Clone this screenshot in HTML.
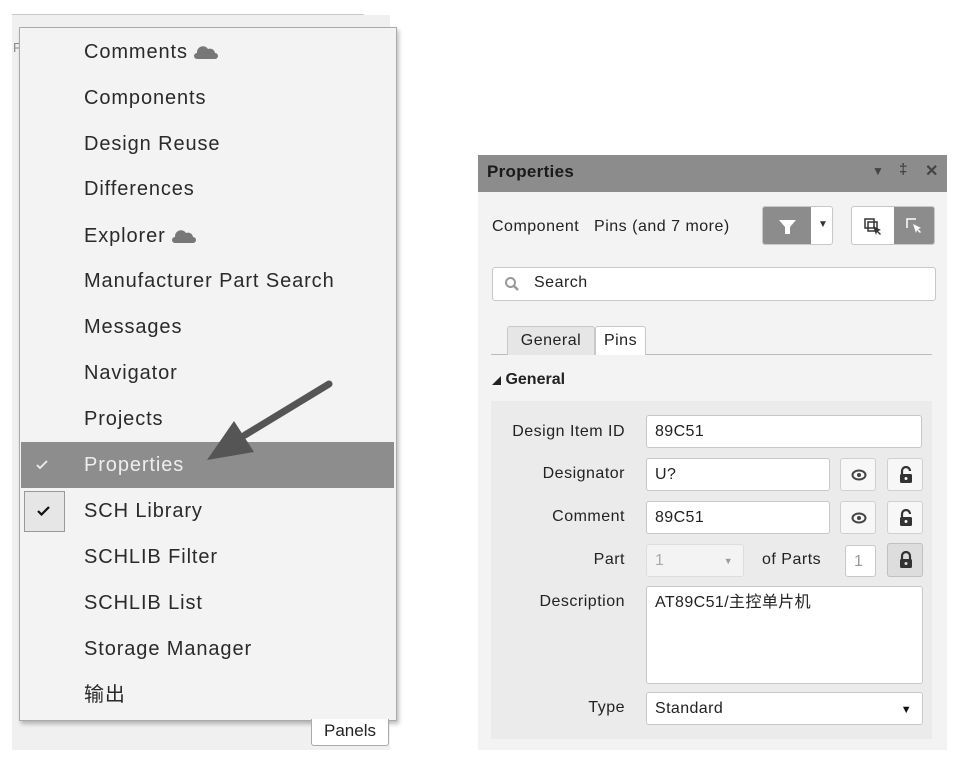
<!DOCTYPE html>
<html><head><meta charset="utf-8"><style>
*{box-sizing:border-box;margin:0;padding:0}
body{width:955px;height:758px;background:#fff;position:relative;overflow:hidden;font-family:"Liberation Sans","Noto Sans CJK SC",sans-serif;color:#222}
.a{position:absolute}
.mi{position:absolute;left:84px;font-size:20px;letter-spacing:0.9px;line-height:24px;color:#2a2a2a;white-space:nowrap}
.cloud{display:inline-block;width:24px;height:13px;vertical-align:-1px;margin-left:6px}
.lbl{position:absolute;right:0;font-size:16px;letter-spacing:0.5px;color:#222;text-align:right;width:160px;white-space:nowrap}
.inp{position:absolute;background:#fff;border:1px solid #c8c8c8;border-radius:3px;font-size:16px;letter-spacing:0.4px;padding-left:8px;line-height:32px;color:#222;white-space:nowrap}
.btn{position:absolute;background:#f7f7f7;border:1px solid #cfcfcf;border-radius:3px}
.p{font-size:16px;letter-spacing:0.5px;white-space:nowrap}
</style></head><body>
<div class="a" style="left:12px;top:14px;width:352px;height:1px;background:#c8c8c8"></div>
<div class="a" style="left:12px;top:15px;width:378px;height:735px;background:#f0f0f0"></div>
<div class="a" style="left:13px;top:40px;font-size:13px;color:#888">F</div>
<div class="a" style="left:19px;top:27px;width:378px;height:694px;background:#f3f3f3;border:1px solid #aaa;box-shadow:2px 3px 4px rgba(0,0,0,.25)"></div>
<div class="a" style="left:21px;top:442px;width:373px;height:46px;background:#8d8d8d"></div>
<div class="a" style="left:24px;top:491px;width:41px;height:41px;border:1px solid #999;background:#e6e6e6"></div>
<svg class="a" style="left:36px;top:460px" width="12" height="10"><path d="M1 5l3 3l7-7" fill="none" stroke="#eee" stroke-width="1.8"/></svg>
<svg class="a" style="left:37px;top:506px" width="13" height="10"><path d="M1 5l3.5 3.5l7.5-7.5" fill="none" stroke="#111" stroke-width="2.2"/></svg>
<div class="mi" style="top:40px">Comments<svg class="cloud" viewBox="0 0 24 13"><path d="M3 13a3 3 0 0 1 0-6a6 6 0 0 1 11-4a5 5 0 0 1 7 4a3 3 0 0 1 0 6z" fill="#777"/></svg></div>
<div class="mi" style="top:86px">Components</div>
<div class="mi" style="top:132px">Design Reuse</div>
<div class="mi" style="top:177px">Differences</div>
<div class="mi" style="top:224px">Explorer<svg class="cloud" viewBox="0 0 24 13"><path d="M3 13a3 3 0 0 1 0-6a6 6 0 0 1 11-4a5 5 0 0 1 7 4a3 3 0 0 1 0 6z" fill="#777"/></svg></div>
<div class="mi" style="top:269px">Manufacturer Part Search</div>
<div class="mi" style="top:315px">Messages</div>
<div class="mi" style="top:361px">Navigator</div>
<div class="mi" style="top:407px">Projects</div>
<div class="mi" style="top:453px;color:#eee">Properties</div>
<div class="mi" style="top:499px">SCH Library</div>
<div class="mi" style="top:545px">SCHLIB Filter</div>
<div class="mi" style="top:591px">SCHLIB List</div>
<div class="mi" style="top:637px">Storage Manager</div>
<div class="mi" style="top:683px">输出</div>
<div class="a" style="left:311px;top:719px;width:78px;height:27px;background:#fff;border:1px solid #aaa;border-top:none;border-radius:0 0 3px 3px;font-size:17px;text-align:center;line-height:24px">Panels</div>
<svg class="a" style="left:0;top:0" width="400" height="500"><line x1="329" y1="384" x2="245" y2="435" stroke="#555" stroke-width="7" stroke-linecap="round"/><polygon points="207,460 234,421 254,452" fill="#555"/></svg>
<div class="a" style="left:478px;top:155px;width:469px;height:37px;background:#8c8c8c"></div>
<div class="a" style="left:487px;top:162px;font-size:17px;letter-spacing:0.3px;font-weight:bold;color:#1a1a1a">Properties</div>
<div class="a" style="left:872px;top:164px;font-size:12px;color:#444">▼</div>
<div class="a" style="left:899px;top:161px;font-size:15px;color:#444;font-weight:bold">‡</div>
<div class="a" style="left:925px;top:161px;font-size:16px;color:#444;font-weight:bold">✕</div>
<div class="a" style="left:478px;top:192px;width:469px;height:558px;background:#f3f3f3"></div>
<div class="a p" style="left:492px;top:218px">Component&nbsp;&nbsp; Pins (and 7 more)</div>
<div class="a" style="left:762px;top:206px;width:71px;height:39px;border:1px solid #c8c8c8;border-radius:3px;background:#fff;overflow:hidden"><div style="position:absolute;left:0;top:0;width:48px;height:39px;background:#8c8c8c"></div><svg style="position:absolute;left:16px;top:13px" width="17" height="14"><path d="M0 0h17l-6 7v7h-5v-7z" fill="#fff"/></svg><div style="position:absolute;left:55px;top:12px;font-size:10px;color:#333">▼</div></div>
<div class="a" style="left:851px;top:206px;width:84px;height:39px;border:1px solid #c8c8c8;border-radius:3px;background:#fff;overflow:hidden"><div style="position:absolute;left:42px;top:0;width:42px;height:39px;background:#8c8c8c"></div>
<svg style="position:absolute;left:12px;top:11px" width="20" height="18"><rect x="1" y="1" width="9" height="9" fill="none" stroke="#333" stroke-width="1.5"/><rect x="4" y="4" width="9" height="9" fill="none" stroke="#333" stroke-width="1.5"/><path d="M9 8l8 4l-3 1l3 3l-1 1l-3-3l-1 3z" fill="#333"/></svg>
<svg style="position:absolute;left:54px;top:11px" width="20" height="18"><path d="M1 10V1h9" fill="none" stroke="#fff" stroke-width="1.5"/><path d="M7 6l8 4l-3 1l3 3l-1 1l-3-3l-1 3z" fill="#fff"/></svg></div>
<div class="a" style="left:492px;top:267px;width:444px;height:34px;background:#fff;border:1px solid #c8c8c8;border-radius:3px"></div>
<svg class="a" style="left:504px;top:276px" width="16" height="16"><circle cx="6.5" cy="6.5" r="4.5" fill="none" stroke="#999" stroke-width="2"/><line x1="10" y1="10" x2="14" y2="14" stroke="#999" stroke-width="2.5"/></svg>
<div class="a p" style="left:534px;top:274px">Search</div>
<div class="a" style="left:491px;top:354px;width:441px;height:1px;background:#bbb"></div>
<div class="a p" style="left:507px;top:326px;width:88px;height:29px;background:#e6e6e6;border:1px solid #c8c8c8;border-bottom:none;border-radius:3px 3px 0 0;text-align:center;line-height:28px">General</div>
<div class="a p" style="left:595px;top:326px;width:51px;height:29px;background:#fff;border:1px solid #c8c8c8;border-bottom:none;border-radius:3px 3px 0 0;text-align:center;line-height:28px">Pins</div>
<div class="a" style="left:492px;top:371px;font-size:16px;font-weight:bold"><span style="font-size:9px;font-weight:normal">◢</span> General</div>
<div class="a" style="left:491px;top:401px;width:441px;height:338px;background:#ebebeb"></div>
<div class="a" style="left:465px;top:0;width:160px;height:0">
<div class="lbl" style="top:423px">Design Item ID</div>
<div class="lbl" style="top:465px">Designator</div>
<div class="lbl" style="top:508px">Comment</div>
<div class="lbl" style="top:551px">Part</div>
<div class="lbl" style="top:593px">Description</div>
<div class="lbl" style="top:699px">Type</div>
</div>
<div class="inp" style="left:646px;top:415px;width:276px;height:33px">89C51</div>
<div class="inp" style="left:646px;top:458px;width:184px;height:33px">U?</div>
<div class="inp" style="left:646px;top:501px;width:184px;height:33px">89C51</div>
<div class="inp" style="left:646px;top:544px;width:98px;height:33px;background:#f3f3f3;border-color:#ddd;color:#aaa">1<span style="position:absolute;right:10px;top:0;font-size:9px;color:#999">▼</span></div>
<div class="a p" style="left:762px;top:551px">of Parts</div>
<div class="inp" style="left:845px;top:545px;width:31px;height:32px;color:#999">1</div>
<div class="inp" style="left:646px;top:586px;width:277px;height:98px;line-height:24px;padding-top:4px">AT89C51/主控单片机</div>
<div class="inp" style="left:646px;top:692px;width:277px;height:33px">Standard<span style="position:absolute;right:10px;top:1px;font-size:11px;color:#111">▼</span></div>
<div class="btn" style="left:840px;top:458px;width:36px;height:33px"><svg style="position:absolute;left:10px;top:10px" width="16" height="12"><ellipse cx="8" cy="6" rx="6.5" ry="4.5" fill="none" stroke="#444" stroke-width="2"/><circle cx="8" cy="6" r="2" fill="#444"/></svg></div>
<div class="btn" style="left:840px;top:501px;width:36px;height:33px"><svg style="position:absolute;left:10px;top:10px" width="16" height="12"><ellipse cx="8" cy="6" rx="6.5" ry="4.5" fill="none" stroke="#444" stroke-width="2"/><circle cx="8" cy="6" r="2" fill="#444"/></svg></div>
<div class="btn" style="left:887px;top:458px;width:36px;height:33px"><svg style="position:absolute;left:11px;top:7px" width="14" height="18"><path d="M3 8V5a4 4 0 0 1 8 0" fill="none" stroke="#333" stroke-width="2.2"/><rect x="1" y="8" width="12" height="9" rx="1.5" fill="#333"/><circle cx="7" cy="12.5" r="1.5" fill="#fff"/></svg></div>
<div class="btn" style="left:887px;top:501px;width:36px;height:33px"><svg style="position:absolute;left:11px;top:7px" width="14" height="18"><path d="M3 8V5a4 4 0 0 1 8 0" fill="none" stroke="#333" stroke-width="2.2"/><rect x="1" y="8" width="12" height="9" rx="1.5" fill="#333"/><circle cx="7" cy="12.5" r="1.5" fill="#fff"/></svg></div>
<div class="btn" style="left:887px;top:543px;width:36px;height:34px;background:#ddd;border-color:#c0c0c0"><svg style="position:absolute;left:11px;top:7px" width="14" height="18"><path d="M3 8V5a4 4 0 0 1 8 0v3" fill="none" stroke="#333" stroke-width="2.2"/><rect x="1" y="8" width="12" height="9" rx="1.5" fill="#333"/><circle cx="7" cy="12.5" r="1.5" fill="#ddd"/></svg></div>
</body></html>
